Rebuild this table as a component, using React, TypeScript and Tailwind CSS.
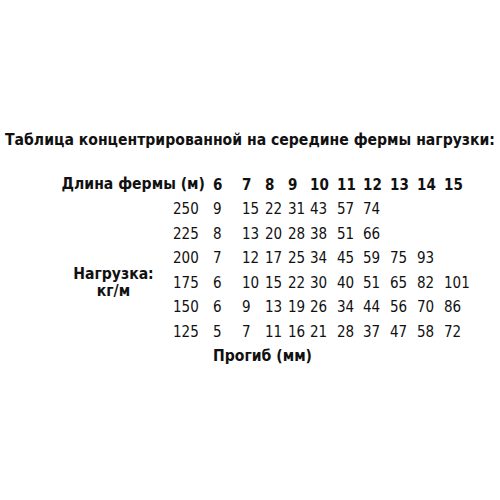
const spans = ["6", "7", "8", "9", "10", "11", "12", "13", "14", "15"];

const rows: { load: string; values: string[] }[] = [
  { load: "250", values: ["9", "15", "22", "31", "43", "57", "74"] },
  { load: "225", values: ["8", "13", "20", "28", "38", "51", "66"] },
  { load: "200", values: ["7", "12", "17", "25", "34", "45", "59", "75", "93"] },
  { load: "175", values: ["6", "10", "15", "22", "30", "40", "51", "65", "82", "101"] },
  { load: "150", values: ["6", "9", "13", "19", "26", "34", "44", "56", "70", "86"] },
  { load: "125", values: ["5", "7", "11", "16", "21", "28", "37", "47", "58", "72"] },
];

export default function App() {
  return (
    <div
      className="h-[500px] w-[500px] bg-white text-[15px] text-[#111] font-stretch-condensed"
      style={{ fontFamily: '"DejaVu Sans Condensed", "DejaVu Sans", Tahoma, sans-serif' }}
    >
      <div className="h-[130px]" />
      <h1 className="text-center text-[15.6px] font-bold leading-[20px]">
        Таблица концентрированной на середине фермы нагрузки:
      </h1>
      <div className="mt-[23px] pl-[60px] grid grid-cols-[113px_40px_29px_23px_23px_22px_27px_26px_27px_27px_27px_36px] auto-rows-[24.5px] items-center leading-none">
        {/* header */}
        <div className="col-span-2 pr-[8px] text-right text-[15.6px] font-bold whitespace-nowrap">Длина фермы (м)</div>
        {spans.map((s) => (
          <div key={s} className="font-bold">
            {s}
          </div>
        ))}

        {rows.map((row, r) => (
          <div key={row.load} className="contents">
            {r === 2 ? (
              <div className="row-span-3 pr-[6px] text-center text-[15.6px] font-bold leading-[17px]">
                Нагрузка:
                <br />
                кг/м
              </div>
            ) : r >= 2 && r <= 4 ? null : (
              <div />
            )}
            <div>{row.load}</div>
            {spans.map((s, i) => (
              <div key={s}>{row.values[i] ?? ""}</div>
            ))}
          </div>
        ))}

        {/* footer */}
        <div className="col-span-2" />
        <div className="col-span-10 text-[15.6px] font-bold">Прогиб (мм)</div>
      </div>
    </div>
  );
}
